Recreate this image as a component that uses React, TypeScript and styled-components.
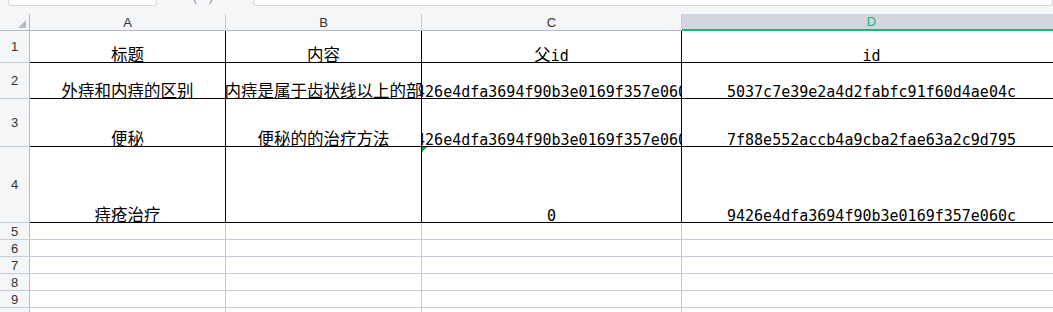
import React from "react";
import styled, { createGlobalStyle } from "styled-components";

const GlobalStyle = createGlobalStyle`
  body {
    margin: 0;
    background: #ffffff;
    font-family: "Liberation Sans", "Noto Sans CJK SC", sans-serif;
  }
`;

const GRID_LINE = "#c6cbd8";
const HEAD_LINE = "#b3b9c9";
const HEAD_BG = "#f5f6f8";
const GREEN = "#21b37a";

type CellData = { text: string; kind: "cjk" | "mono"; lead?: string };
type RowData = { height: number; cells: CellData[] };

const rows: RowData[] = [
  {
    height: 32,
    cells: [
      { text: "标题", kind: "cjk" },
      { text: "内容", kind: "cjk" },
      { text: "id", kind: "mono", lead: "父" },
      { text: "id", kind: "mono" },
    ],
  },
  {
    height: 36,
    cells: [
      { text: "外痔和内痔的区别", kind: "cjk" },
      { text: "内痔是属于齿状线以上的部", kind: "cjk" },
      { text: "9426e4dfa3694f90b3e0169f357e060c", kind: "mono" },
      { text: "5037c7e39e2a4d2fabfc91f60d4ae04c", kind: "mono" },
    ],
  },
  {
    height: 48,
    cells: [
      { text: "便秘", kind: "cjk" },
      { text: "便秘的的治疗方法", kind: "cjk" },
      { text: "9426e4dfa3694f90b3e0169f357e060c", kind: "mono" },
      { text: "7f88e552accb4a9cba2fae63a2c9d795", kind: "mono" },
    ],
  },
  {
    height: 76,
    cells: [
      { text: "痔疮治疗", kind: "cjk" },
      { text: "", kind: "cjk" },
      { text: "0", kind: "mono" },
      { text: "9426e4dfa3694f90b3e0169f357e060c", kind: "mono" },
    ],
  },
];

const emptyRows = [5, 6, 7, 8, 9, 10];
const columns = ["A", "B", "C", "D"];

const Sheet = styled.div`
  width: 1053px;
  height: 312px;
  overflow: hidden;
  background: #ffffff;
`;

const TopStrip = styled.div`
  height: 14px;
  background: ${HEAD_BG};
  display: flex;
  align-items: flex-start;
  overflow: hidden;
`;

const NameBox = styled.div<{ $width: string }>`
  box-sizing: border-box;
  width: ${({ $width }) => $width};
  height: 6px;
  background: #ffffff;
  border: 1px solid #d3d6dc;
  border-top: 0;
  border-radius: 0 0 4px 4px;
  flex: ${({ $width }) => ($width === "auto" ? "1" : "none")};
`;

const FxLabel = styled.div`
  width: 96px;
  display: flex;
  justify-content: center;
  font-size: 13px;
  line-height: 13px;
  margin-top: -10px;
  color: #8a8f99;
  letter-spacing: 4px;
`;

const Grid = styled.div`
  display: grid;
  grid-template-columns: 30px 196px 196px 260px 380px;
`;

const Corner = styled.div`
  position: relative;
  box-sizing: border-box;
  height: 17px;
  background: ${HEAD_BG};
  border-right: 1px solid ${HEAD_LINE};
  border-bottom: 1px solid ${HEAD_LINE};
`;

const CornerMark = styled.div`
  position: absolute;
  right: 3px;
  bottom: 2px;
  width: 0;
  height: 0;
  border-left: 8px solid transparent;
  border-bottom: 8px solid #b7bac1;
`;

const ColHead = styled.div<{ $active?: boolean }>`
  box-sizing: border-box;
  height: 17px;
  display: flex;
  align-items: center;
  justify-content: center;
  font-size: 13px;
  color: ${({ $active }) => ($active ? GREEN : "#333333")};
  background: ${({ $active }) => ($active ? "#d3d6de" : HEAD_BG)};
  border-right: 1px solid ${GRID_LINE};
  border-bottom: ${({ $active }) =>
    $active ? `2px solid ${GREEN}` : `1px solid ${HEAD_LINE}`};
`;

const RowHead = styled.div<{ $height: number }>`
  box-sizing: border-box;
  height: ${({ $height }) => $height}px;
  display: flex;
  align-items: center;
  justify-content: center;
  font-size: 13px;
  color: #333333;
  background: ${HEAD_BG};
  border-right: 1px solid ${HEAD_LINE};
  border-bottom: 1px solid ${GRID_LINE};
`;

const Cell = styled.div<{ $height: number; $framed: boolean; $last?: boolean }>`
  position: relative;
  box-sizing: border-box;
  height: ${({ $height }) => $height}px;
  display: flex;
  align-items: flex-end;
  justify-content: center;
  overflow: hidden;
  white-space: nowrap;
  color: #000000;
  border-right: 1px solid
    ${({ $framed, $last }) => ($framed && !$last ? "#000000" : GRID_LINE)};
  border-bottom: 1px solid ${({ $framed }) => ($framed ? "#000000" : GRID_LINE)};
`;

const CjkText = styled.span`
  flex-shrink: 0;
  font-family: "Noto Sans CJK SC", sans-serif;
  font-size: 16.5px;
  line-height: 16px;
`;

const MonoText = styled.span`
  flex-shrink: 0;
  font-family: "DejaVu Sans Mono", "Liberation Mono", monospace;
  font-size: 15px;
  line-height: 12px;
`;

const LeadChar = styled.span`
  font-family: "Noto Sans CJK SC", sans-serif;
  font-size: 16.5px;
`;

const CommentMark = styled.div`
  position: absolute;
  left: 0;
  top: 0;
  width: 0;
  height: 0;
  border-top: 5px solid #1f9a3a;
  border-right: 5px solid transparent;
`;

const App = () => {
  return (
    <>
      <GlobalStyle />
      <Sheet>
        <TopStrip>
          <NameBox $width="149px" style={{ marginLeft: 8 }} />
          <FxLabel>( )</FxLabel>
          <NameBox $width="auto" />
        </TopStrip>
        <Grid>
          <Corner>
            <CornerMark />
          </Corner>
          {columns.map((c) => (
            <ColHead key={c} $active={c === "D"}>
              {c}
            </ColHead>
          ))}

          {rows.map((row, ri) => (
            <React.Fragment key={ri}>
              <RowHead $height={row.height}>{ri + 1}</RowHead>
              {row.cells.map((cell, ci) => (
                <Cell
                  key={ci}
                  $height={row.height}
                  $framed
                  $last={ci === 3}
                >
                  {ri === 3 && ci === 2 && <CommentMark />}
                  {cell.kind === "cjk" ? (
                    <CjkText>{cell.text}</CjkText>
                  ) : (
                    <MonoText>
                      {cell.lead && <LeadChar>{cell.lead}</LeadChar>}
                      {cell.text}
                    </MonoText>
                  )}
                </Cell>
              ))}
            </React.Fragment>
          ))}

          {emptyRows.map((n) => (
            <React.Fragment key={n}>
              <RowHead $height={17}>{n}</RowHead>
              {columns.map((c) => (
                <Cell key={c} $height={17} $framed={false} />
              ))}
            </React.Fragment>
          ))}
        </Grid>
      </Sheet>
    </>
  );
};

export default App;
